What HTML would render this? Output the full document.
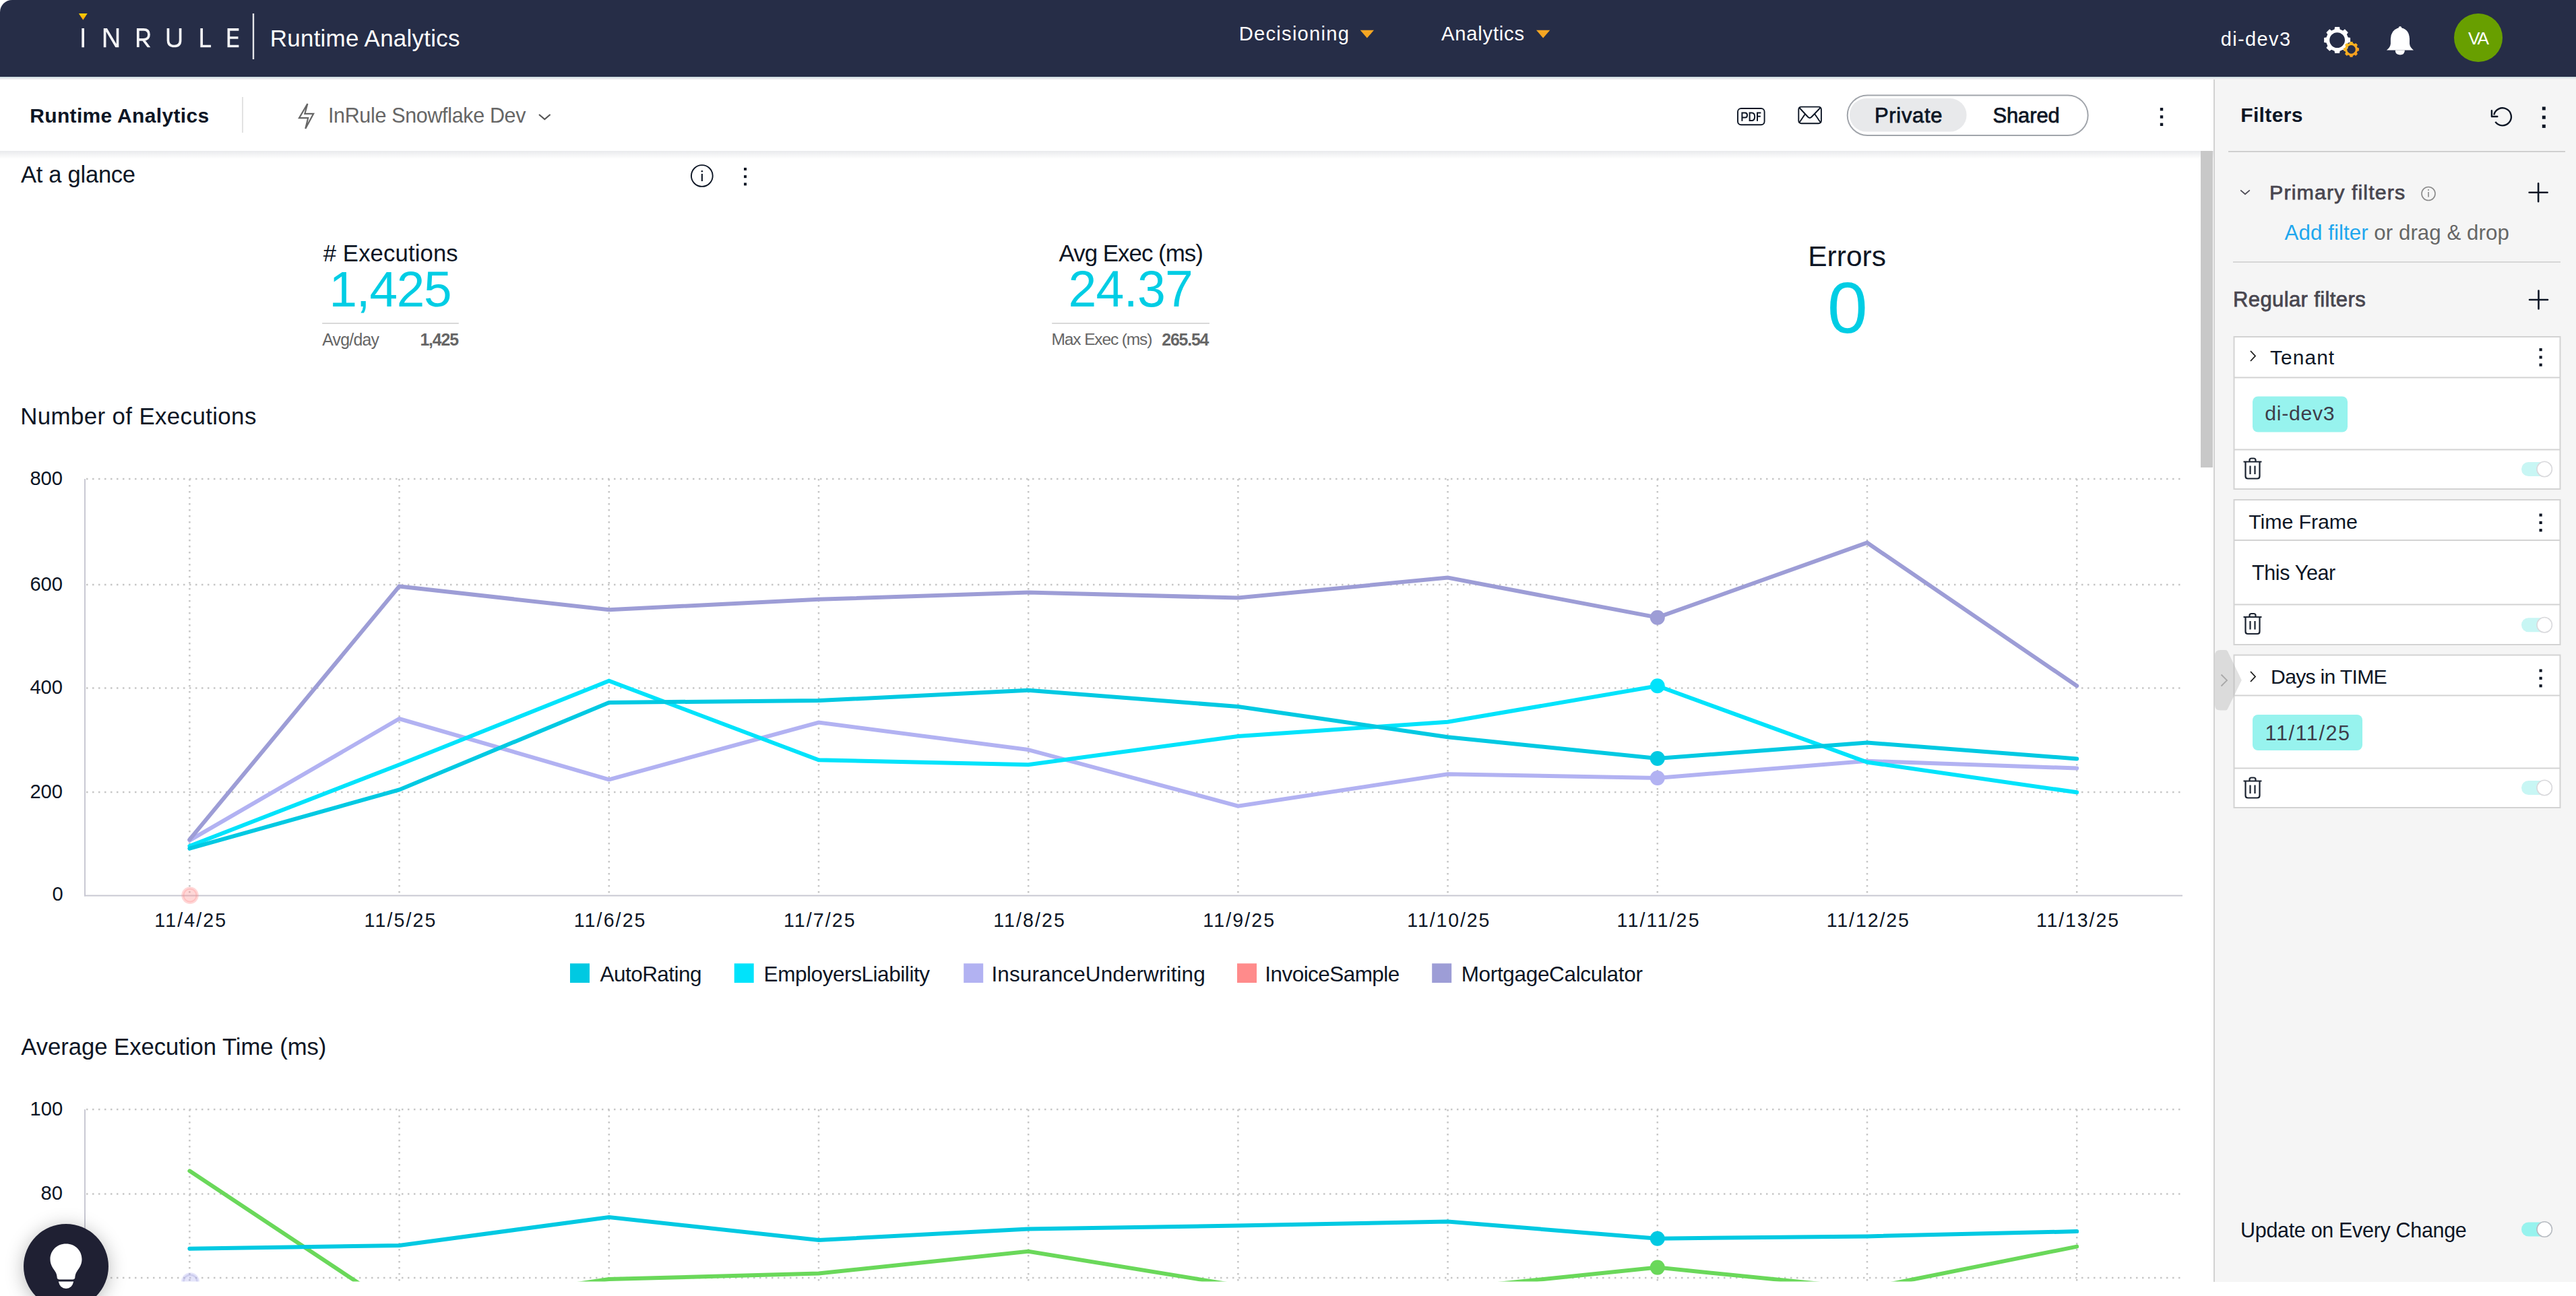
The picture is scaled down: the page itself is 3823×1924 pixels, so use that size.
<!DOCTYPE html><html><head><meta charset='utf-8'><style>
html,body{margin:0;padding:0;width:3823px;height:1924px;overflow:hidden;background:#ffffff}
.t{position:absolute;white-space:nowrap;font-family:"Liberation Sans",sans-serif}
.a{position:absolute}
</style></head><body>
<div class='a' style='left:0;top:0;width:3823px;height:114px;background:#262d47;border-top-left-radius:18px'></div>
<div class='a' style='left:0;top:114px;width:3823px;height:2px;background:#d3dfe3'></div>
<div class='a' style='left:0;top:116px;width:3823px;height:2px;background:#ededf0'></div>
<div class='a' style='left:0;top:224px;width:3286px;height:12px;background:linear-gradient(#e9eaed,#ffffff)'></div>
<div class='a' style='left:3286px;top:118px;width:537px;height:1785px;background:#f5f5f5'></div>
<div class='a' style='left:3284.5px;top:118px;width:2px;height:1785px;background:#d2d2d2'></div>
<div class='a' style='left:3266px;top:224px;width:18px;height:470px;background:#c8c8c8'></div>
<svg class='a' style='left:0;top:0' width='3823' height='1924' viewBox='0 0 3823 1924'><defs><linearGradient id='tri' x1='0' y1='0' x2='0' y2='1'><stop offset='0' stop-color='#ffd200'/><stop offset='1' stop-color='#f39c12'/></linearGradient><linearGradient id='gear2' x1='0' y1='0' x2='1' y2='1'><stop offset='0' stop-color='#f9c623'/><stop offset='1' stop-color='#f7931e'/></linearGradient><clipPath id='c2clip'><rect x='0' y='1580' width='3260' height='322.5'/></clipPath></defs><polygon points='116.9,19.9 129.7,19.9 123.3,29.8' fill='url(#tri)'/><rect x='121.3' y='42' width='3.7' height='28.3' fill='#f4f4f6'/><clipPath id='nclip'><rect x='150' y='42' width='30' height='28.3'/></clipPath><path clip-path='url(#nclip)' d='M155.6,75 V40 L174.5,72 V37' stroke='#f4f4f6' stroke-width='3.7' fill='none' stroke-linejoin='miter'/><clipPath id='rclip'><rect x='200' y='40' width='30' height='30.3'/></clipPath><path clip-path='url(#rclip)' d='M204.8,70.3 V43.8 H213 Q221,43.8 221,51.3 Q221,58.8 213,58.8 H204.8 M212.5,58.8 L222,71.5' stroke='#f4f4f6' stroke-width='3.7' fill='none'/><path d='M249.5,42 V60 Q249.5,68.5 258.5,68.5 Q267.6,68.5 267.6,60 V42' stroke='#f4f4f6' stroke-width='3.7' fill='none'/><path d='M299.2,42 V68.5 H313.1' stroke='#f4f4f6' stroke-width='3.7' fill='none'/><path d='M354.4,43.8 H339.4 V68.5 H354.4 M339.4,56 H353.5' stroke='#f4f4f6' stroke-width='3.7' fill='none'/><rect x='374.8' y='20' width='2.4' height='68' fill='#e6e6ea'/><polygon points='2018.7,44.7 2039,44.7 2028.85,56.6' fill='#f5a623'/><polygon points='2280,44.7 2300.3,44.7 2290.15,56.6' fill='#f5a623'/><path d='M3484.71,55.60 L3488.09,56.12 L3488.09,63.08 L3484.71,63.60 L3482.82,68.16 L3484.84,70.92 L3479.92,75.84 L3477.16,73.82 L3472.60,75.71 L3472.08,79.09 L3465.12,79.09 L3464.60,75.71 L3460.04,73.82 L3457.28,75.84 L3452.36,70.92 L3454.38,68.16 L3452.49,63.60 L3449.11,63.08 L3449.11,56.12 L3452.49,55.60 L3454.38,51.04 L3452.36,48.28 L3457.28,43.36 L3460.04,45.38 L3464.60,43.49 L3465.12,40.11 L3472.08,40.11 L3472.60,43.49 L3477.16,45.38 L3479.92,43.36 L3484.84,48.28 L3482.82,51.04 Z M3480.00,59.60 A11.4,11.4 0 1 0 3457.20,59.60 A11.4,11.4 0 1 0 3480.00,59.60 Z' fill='#ffffff' fill-rule='evenodd'/><path d='M3498.82,71.09 L3500.92,71.36 L3500.92,75.44 L3498.82,75.71 L3497.72,78.35 L3499.02,80.03 L3496.13,82.92 L3494.45,81.62 L3491.81,82.72 L3491.54,84.82 L3487.46,84.82 L3487.19,82.72 L3484.55,81.62 L3482.87,82.92 L3479.98,80.03 L3481.28,78.35 L3480.18,75.71 L3478.08,75.44 L3478.08,71.36 L3480.18,71.09 L3481.28,68.45 L3479.98,66.77 L3482.87,63.88 L3484.55,65.18 L3487.19,64.08 L3487.46,61.98 L3491.54,61.98 L3491.81,64.08 L3494.45,65.18 L3496.13,63.88 L3499.02,66.77 L3497.72,68.45 Z M3495.80,73.40 A6.3,6.3 0 1 0 3483.20,73.40 A6.3,6.3 0 1 0 3495.80,73.40 Z' fill='url(#gear2)' fill-rule='evenodd'/><path d='M3562,38.9 q2.2,0 2.4,2.6 q11,2.6 11.6,16 v7.5 q0.6,5.5 6,9.5 h-40.1 q5.4,-4 6,-9.5 v-7.5 q0.6,-13.4 11.6,-16 q0.2,-2.6 2.5,-2.6 z' fill='#ffffff'/><path d='M3554.8,74.6 h14.1 q0,6.8 -7.05,6.8 q-7.05,0 -7.05,-6.8 z' fill='#ffffff'/><circle cx='3678' cy='56' r='36' fill='#689f00'/><rect x='359' y='144' width='2' height='53' fill='#e2e2e2'/><path d='M456.4,154 L444,175.2 L457.2,175.2 L453.3,190.9 L465.2,168.8 L452.4,168.8 Z' fill='none' stroke='#666' stroke-width='2.2' stroke-linejoin='miter'/><path d='M800,170 L808.3,177 L816.6,170' fill='none' stroke='#555' stroke-width='2.2'/><rect x='2579' y='161' width='39.6' height='24.3' rx='5' fill='none' stroke='#0d1625' stroke-width='1.9'/><path d='M2585.4,179.8 V167.4 H2590 Q2593,167.4 2593,171 Q2593,174.6 2590,174.6 H2585.4' fill='none' stroke='#0d1625' stroke-width='2'/><path d='M2596.6,179 V167.4 H2599.6 Q2604.2,167.4 2604.2,173.2 Q2604.2,179 2599.6,179 Z' fill='none' stroke='#0d1625' stroke-width='2'/><path d='M2608,179.8 V167.4 H2613.4 M2608,172.8 H2612.8' fill='none' stroke='#0d1625' stroke-width='2'/><rect x='2669.3' y='158.6' width='33.6' height='24.6' rx='4' fill='none' stroke='#0d1625' stroke-width='1.9'/><path d='M2670,159.5 L2683,173.5 Q2685.8,176.5 2688.6,173.5 L2702,159.5 M2670,182.5 L2678.8,169.5 M2702.3,182.5 L2693.4,169.5' fill='none' stroke='#0d1625' stroke-width='1.9'/><rect x='2741.7' y='141.4' width='357' height='59.5' rx='29.75' fill='#ffffff' stroke='#a1a5ab' stroke-width='2'/><rect x='2745' y='146' width='173.6' height='49.6' rx='24.8' fill='#e8e9eb'/><rect x='3205.8' y='160.0' width='4.4' height='4.4' fill='#0d1625'/><rect x='3205.8' y='171.3' width='4.4' height='4.4' fill='#0d1625'/><rect x='3205.8' y='182.6' width='4.4' height='4.4' fill='#0d1625'/><rect x='1104.0' y='249.0' width='4' height='4' fill='#0d1625'/><rect x='1104.0' y='260.2' width='4' height='4' fill='#0d1625'/><rect x='1104.0' y='271.4' width='4' height='4' fill='#0d1625'/><rect x='3772.8' y='158.5' width='5' height='5' fill='#0d1625'/><rect x='3772.8' y='171.7' width='5' height='5' fill='#0d1625'/><rect x='3772.8' y='184.9' width='5' height='5' fill='#0d1625'/><circle cx='1041.8' cy='261' r='15.9' fill='none' stroke='#0d1625' stroke-width='1.9'/><rect x='1040.8' y='258' width='2.1' height='11' fill='#0d1625'/><circle cx='1041.85' cy='254.3' r='1.3' fill='#0d1625'/><path d='M3703.3,180.9 A13,13 0 1 0 3701.2,170.5' fill='none' stroke='#0d1625' stroke-width='2.4'/><path d='M3697.9,164.3 V173 H3706.3' fill='none' stroke='#0d1625' stroke-width='2.4' stroke-linecap='round' stroke-linejoin='round'/><rect x='478.2' y='479' width='202.6' height='2' fill='#d9d9d9'/><rect x='1561.2' y='479' width='233.7' height='2' fill='#d9d9d9'/><line x1='128' y1='711' x2='3236' y2='711' stroke='#c6c6c6' stroke-width='2.5' stroke-dasharray='2.5 6.5'/><line x1='128' y1='868' x2='3236' y2='868' stroke='#c6c6c6' stroke-width='2.5' stroke-dasharray='2.5 6.5'/><line x1='128' y1='1021.5' x2='3236' y2='1021.5' stroke='#c6c6c6' stroke-width='2.5' stroke-dasharray='2.5 6.5'/><line x1='128' y1='1176' x2='3236' y2='1176' stroke='#c6c6c6' stroke-width='2.5' stroke-dasharray='2.5 6.5'/><line x1='281.4' y1='711' x2='281.4' y2='1328' stroke='#c6c6c6' stroke-width='2.5' stroke-dasharray='2.5 6.5'/><line x1='592.5999999999999' y1='711' x2='592.5999999999999' y2='1328' stroke='#c6c6c6' stroke-width='2.5' stroke-dasharray='2.5 6.5'/><line x1='903.8' y1='711' x2='903.8' y2='1328' stroke='#c6c6c6' stroke-width='2.5' stroke-dasharray='2.5 6.5'/><line x1='1215.0' y1='711' x2='1215.0' y2='1328' stroke='#c6c6c6' stroke-width='2.5' stroke-dasharray='2.5 6.5'/><line x1='1526.1999999999998' y1='711' x2='1526.1999999999998' y2='1328' stroke='#c6c6c6' stroke-width='2.5' stroke-dasharray='2.5 6.5'/><line x1='1837.4' y1='711' x2='1837.4' y2='1328' stroke='#c6c6c6' stroke-width='2.5' stroke-dasharray='2.5 6.5'/><line x1='2148.6' y1='711' x2='2148.6' y2='1328' stroke='#c6c6c6' stroke-width='2.5' stroke-dasharray='2.5 6.5'/><line x1='2459.8' y1='711' x2='2459.8' y2='1328' stroke='#c6c6c6' stroke-width='2.5' stroke-dasharray='2.5 6.5'/><line x1='2771.0' y1='711' x2='2771.0' y2='1328' stroke='#c6c6c6' stroke-width='2.5' stroke-dasharray='2.5 6.5'/><line x1='3082.2' y1='711' x2='3082.2' y2='1328' stroke='#c6c6c6' stroke-width='2.5' stroke-dasharray='2.5 6.5'/><rect x='125' y='711' width='2' height='619.5' fill='#c9c9d3'/><rect x='125' y='1328.6' width='3114' height='2' fill='#c9c9d3'/><circle cx='282' cy='1329.2' r='12.7' fill='#ff8b8b' fill-opacity='0.35'/><circle cx='282' cy='1329.2' r='9.5' fill='none' stroke='#ff8b8b' stroke-opacity='0.3' stroke-width='2'/><polyline points='281.4,1247.6 592.6,1067.0 903.8,1157.3 1215.0,1072.5 1526.2,1113.1 1837.4,1196.6 2148.6,1149.3 2459.8,1155.0 2771.0,1129.8 3082.2,1140.5' fill='none' stroke='#b2b2f2' stroke-width='6' stroke-linejoin='miter' stroke-linecap='round'/><polyline points='281.4,1256.0 592.6,1135.2 903.8,1010.8 1215.0,1128.2 1526.2,1135.2 1837.4,1093.0 2148.6,1071.8 2459.8,1018.3 2771.0,1131.5 3082.2,1176.3' fill='none' stroke='#00e3fb' stroke-width='6' stroke-linejoin='miter' stroke-linecap='round'/><polyline points='281.4,1259.6 592.6,1172.5 903.8,1042.9 1215.0,1040.1 1526.2,1024.8 1837.4,1049.0 2148.6,1094.2 2459.8,1126.0 2771.0,1102.5 3082.2,1126.4' fill='none' stroke='#00c9e2' stroke-width='6' stroke-linejoin='miter' stroke-linecap='round'/><polyline points='281.4,1246.3 592.6,870.4 903.8,905.3 1215.0,889.8 1526.2,879.6 1837.4,887.6 2148.6,857.6 2459.8,916.7 2771.0,805.7 3082.2,1018.3' fill='none' stroke='#9d9dd6' stroke-width='6' stroke-linejoin='miter' stroke-linecap='round'/><circle cx='2459.8' cy='1155' r='11' fill='#b2b2f2'/><circle cx='2459.8' cy='1018.3' r='11' fill='#00e3fb'/><circle cx='2459.8' cy='1126' r='11' fill='#00c9e2'/><circle cx='2459.8' cy='916.7' r='11' fill='#9d9dd6'/><rect x='846' y='1430.3' width='29' height='28.7' fill='#00c9e2'/><rect x='1089.7' y='1430.3' width='29' height='28.7' fill='#00e3fb'/><rect x='1430.2' y='1430.3' width='29' height='28.7' fill='#b2b2f2'/><rect x='1836' y='1430.3' width='29' height='28.7' fill='#ff8b8b'/><rect x='2125.2' y='1430.3' width='29' height='28.7' fill='#9d9dd6'/><g clip-path='url(#c2clip)'><line x1='128' y1='1647' x2='3236' y2='1647' stroke='#c6c6c6' stroke-width='2.5' stroke-dasharray='2.5 6.5'/><line x1='128' y1='1772.5' x2='3236' y2='1772.5' stroke='#c6c6c6' stroke-width='2.5' stroke-dasharray='2.5 6.5'/><line x1='128' y1='1897' x2='3236' y2='1897' stroke='#c6c6c6' stroke-width='2.5' stroke-dasharray='2.5 6.5'/><line x1='281.4' y1='1647' x2='281.4' y2='1910' stroke='#c6c6c6' stroke-width='2.5' stroke-dasharray='2.5 6.5'/><line x1='592.5999999999999' y1='1647' x2='592.5999999999999' y2='1910' stroke='#c6c6c6' stroke-width='2.5' stroke-dasharray='2.5 6.5'/><line x1='903.8' y1='1647' x2='903.8' y2='1910' stroke='#c6c6c6' stroke-width='2.5' stroke-dasharray='2.5 6.5'/><line x1='1215.0' y1='1647' x2='1215.0' y2='1910' stroke='#c6c6c6' stroke-width='2.5' stroke-dasharray='2.5 6.5'/><line x1='1526.1999999999998' y1='1647' x2='1526.1999999999998' y2='1910' stroke='#c6c6c6' stroke-width='2.5' stroke-dasharray='2.5 6.5'/><line x1='1837.4' y1='1647' x2='1837.4' y2='1910' stroke='#c6c6c6' stroke-width='2.5' stroke-dasharray='2.5 6.5'/><line x1='2148.6' y1='1647' x2='2148.6' y2='1910' stroke='#c6c6c6' stroke-width='2.5' stroke-dasharray='2.5 6.5'/><line x1='2459.8' y1='1647' x2='2459.8' y2='1910' stroke='#c6c6c6' stroke-width='2.5' stroke-dasharray='2.5 6.5'/><line x1='2771.0' y1='1647' x2='2771.0' y2='1910' stroke='#c6c6c6' stroke-width='2.5' stroke-dasharray='2.5 6.5'/><line x1='3082.2' y1='1647' x2='3082.2' y2='1910' stroke='#c6c6c6' stroke-width='2.5' stroke-dasharray='2.5 6.5'/><rect x='125' y='1647' width='2' height='300' fill='#c9c9d3'/><circle cx='282.5' cy='1902.7' r='13.5' fill='#b2b2f2' fill-opacity='0.35'/><circle cx='282.5' cy='1902.7' r='10' fill='none' stroke='#9d9dd6' stroke-opacity='0.3' stroke-width='2.5'/><polyline points='281.4,1738.3 592.6,1945.0 903.8,1899.0 1215.0,1890.6 1526.2,1857.8 1837.4,1908.7 2148.6,1913.6 2459.8,1881.6 2771.0,1913.0 3082.2,1850.6' fill='none' stroke='#6ad85a' stroke-width='6' stroke-linejoin='miter' stroke-linecap='round'/><polyline points='281.4,1853.7 592.6,1849.0 903.8,1807.0 1215.0,1841.0 1526.2,1824.6 1837.4,1819.6 2148.6,1813.6 2459.8,1838.7 2771.0,1835.4 3082.2,1828.1' fill='none' stroke='#00c9e2' stroke-width='6' stroke-linejoin='miter' stroke-linecap='round'/><circle cx='2459.8' cy='1881.6' r='11' fill='#6ad85a'/><circle cx='2459.8' cy='1838.7' r='11' fill='#00c9e2'/></g><rect x='3307' y='224' width='500' height='2' fill='#cfcfcf'/><path d='M3325.2,282.4 L3332,288.3 L3338.8,282.4' fill='none' stroke='#4d4b55' stroke-width='1.8'/><circle cx='3604' cy='287.5' r='10' fill='none' stroke='#8a8a8a' stroke-width='1.6'/><rect x='3603.2' y='285' width='1.6' height='7.5' fill='#8a8a8a'/><circle cx='3604' cy='282' r='1.1' fill='#8a8a8a'/><path d='M3753.6,285.8 H3780.6 M3767.1,272.3 V299.3' stroke='#0d1625' stroke-width='2.6' stroke-linecap='round'/><path d='M3754.0,445 H3781.0 M3767.5,431.5 V458.5' stroke='#0d1625' stroke-width='2.6' stroke-linecap='round'/><rect x='3314' y='388' width='486' height='2' fill='#d6d6d6'/><rect x='3315.5' y='500' width='484' height='226' fill='#ffffff' stroke='#d3d3d3' stroke-width='2'/><rect x='3315.5' y='559.5' width='484' height='2' fill='#d3d3d3'/><rect x='3315.5' y='666.5' width='484' height='2' fill='#d3d3d3'/><rect x='3315.5' y='742' width='484' height='215' fill='#ffffff' stroke='#d3d3d3' stroke-width='2'/><rect x='3315.5' y='801' width='484' height='2' fill='#d3d3d3'/><rect x='3315.5' y='896.5' width='484' height='2' fill='#d3d3d3'/><rect x='3315.5' y='972.5' width='484' height='226.5' fill='#ffffff' stroke='#d3d3d3' stroke-width='2'/><rect x='3315.5' y='1031.5' width='484' height='2' fill='#d3d3d3'/><rect x='3315.5' y='1139.5' width='484' height='2' fill='#d3d3d3'/><path d='M3340,521.0 L3347,528.5 L3340,536.0' fill='none' stroke='#1a1a1a' stroke-width='1.8'/><path d='M3340,997.0 L3347,1004.5 L3340,1012.0' fill='none' stroke='#1a1a1a' stroke-width='1.8'/><rect x='3768.5' y='517.0' width='4.2' height='4.2' fill='#0d1625'/><rect x='3768.5' y='528.3' width='4.2' height='4.2' fill='#0d1625'/><rect x='3768.5' y='539.6' width='4.2' height='4.2' fill='#0d1625'/><rect x='3768.5' y='762.5' width='4.2' height='4.2' fill='#0d1625'/><rect x='3768.5' y='773.8' width='4.2' height='4.2' fill='#0d1625'/><rect x='3768.5' y='785.1' width='4.2' height='4.2' fill='#0d1625'/><rect x='3768.5' y='993.5' width='4.2' height='4.2' fill='#0d1625'/><rect x='3768.5' y='1004.8' width='4.2' height='4.2' fill='#0d1625'/><rect x='3768.5' y='1016.1' width='4.2' height='4.2' fill='#0d1625'/><rect x='3343' y='588.5' width='141' height='53' rx='8' fill='#97f3ee'/><rect x='3343' y='1061' width='163' height='53' rx='8' fill='#97f3ee'/><path d='M3329.5,685.5 H3356.5 M3338.5,685.5 V683.0 Q3338.5,680.5 3341.5,680.5 H3344.5 Q3347.5,680.5 3347.5,683.0 V685.5 M3332.5,685.5 V707.0 Q3332.5,710.5 3336.0,710.5 H3350.0 Q3353.5,710.5 3353.5,707.0 V685.5 M3339.5,691.5 V704.0 M3346.5,691.5 V704.0' fill='none' stroke='#1a2230' stroke-width='2.2'/><path d='M3329.5,916 H3356.5 M3338.5,916 V913.5 Q3338.5,911 3341.5,911 H3344.5 Q3347.5,911 3347.5,913.5 V916 M3332.5,916 V937.5 Q3332.5,941 3336.0,941 H3350.0 Q3353.5,941 3353.5,937.5 V916 M3339.5,922 V934.5 M3346.5,922 V934.5' fill='none' stroke='#1a2230' stroke-width='2.2'/><path d='M3329.5,1159.5 H3356.5 M3338.5,1159.5 V1157.0 Q3338.5,1154.5 3341.5,1154.5 H3344.5 Q3347.5,1154.5 3347.5,1157.0 V1159.5 M3332.5,1159.5 V1181.0 Q3332.5,1184.5 3336.0,1184.5 H3350.0 Q3353.5,1184.5 3353.5,1181.0 V1159.5 M3339.5,1165.5 V1178.0 M3346.5,1165.5 V1178.0' fill='none' stroke='#1a2230' stroke-width='2.2'/><rect x='3742' y='686.0' width='44.2' height='21' rx='10.5' fill='#c8f6f4'/><circle cx='3776.2' cy='696.5' r='11.2' fill='#ffffff' stroke='#d9d9dc' stroke-width='1.6'/><rect x='3742' y='917.25' width='44.2' height='21' rx='10.5' fill='#c8f6f4'/><circle cx='3776.2' cy='927.75' r='11.2' fill='#ffffff' stroke='#d9d9dc' stroke-width='1.6'/><rect x='3742' y='1159.0' width='44.2' height='21' rx='10.5' fill='#c8f6f4'/><circle cx='3776.2' cy='1169.5' r='11.2' fill='#ffffff' stroke='#d9d9dc' stroke-width='1.6'/><rect x='3742' y='1814.5' width='44.2' height='21' rx='10.5' fill='#97f3ee'/><circle cx='3776.2' cy='1825' r='11.2' fill='#ffffff' stroke='#b8bcc2' stroke-width='1.6'/><path d='M3295,965 H3303 Q3305,965 3306,967 L3326.8,1009.7 L3306,1052.5 Q3305,1054.6 3303,1054.6 H3295 Q3287,1054.6 3287,1046.6 V973 Q3287,965 3295,965 Z' fill='rgb(175,175,175)' fill-opacity='0.36'/><path d='M3296.5,1001.5 L3305,1010 L3296.5,1018.5' fill='none' stroke='#a8a8a8' stroke-width='1.9'/></svg>
<div class='t' style='left:400.8px;top:38.52px;font-size:35px;line-height:35px;font-weight:400;color:#ffffff;letter-spacing:0.213px;'>Runtime Analytics</div>
<div class='t' style='left:1838.8px;top:35.73px;font-size:29.2px;line-height:29.2px;font-weight:400;color:#ffffff;letter-spacing:1.22px;'>Decisioning</div>
<div class='t' style='left:2138.9px;top:35.73px;font-size:29.2px;line-height:29.2px;font-weight:400;color:#ffffff;letter-spacing:0.8px;'>Analytics</div>
<div class='t' style='left:3295.8px;top:43.5px;font-size:29px;line-height:29px;font-weight:400;color:#ffffff;letter-spacing:1.35px;'>di-dev3</div>
<div class='t' style='left:3662.9px;top:43.96px;font-size:26.2px;line-height:26.2px;font-weight:400;color:#ffffff;letter-spacing:-1.8px;'>VA</div>
<div class='t' style='left:44.3px;top:156.65px;font-size:30px;line-height:30px;font-weight:700;color:#0d1625;letter-spacing:0.325px;'>Runtime Analytics</div>
<div class='t' style='left:486.9px;top:156.13px;font-size:30.5px;line-height:30.5px;font-weight:400;color:#666666;letter-spacing:-0.342px;'>InRule Snowflake Dev</div>
<div class='t' style='left:2782px;top:155.81px;font-size:31px;line-height:31px;font-weight:400;-webkit-text-stroke:0.75px currentColor;color:#0d1625;letter-spacing:0.667px;'>Private</div>
<div class='t' style='left:2957.4px;top:155.81px;font-size:31px;line-height:31px;font-weight:400;-webkit-text-stroke:0.75px currentColor;color:#0d1625;letter-spacing:-0.1px;'>Shared</div>
<div class='t' style='left:3325.2px;top:156.37px;font-size:30.1px;line-height:30.1px;font-weight:700;color:#0d1625;letter-spacing:0.333px;'>Filters</div>
<div class='t' style='left:30.9px;top:241.66px;font-size:34.6px;line-height:34.6px;font-weight:400;color:#0d1625;letter-spacing:-0.28px;'>At a glance</div>
<div class='t' style='left:479.7px;top:358.68px;font-size:34.7px;line-height:34.7px;font-weight:400;color:#0d1625;letter-spacing:0.127px;'># Executions</div>
<div class='t' style='left:488.5px;top:392.48px;font-size:74.7px;line-height:74.7px;font-weight:400;color:#00cde4;letter-spacing:-1.2px;'>1,425</div>
<div class='t' style='left:478.2px;top:491.96px;font-size:24.9px;line-height:24.9px;font-weight:400;color:#666666;letter-spacing:-0.783px;'>Avg/day</div>
<div class='t' style='left:623.4px;top:491.96px;font-size:24.9px;line-height:24.9px;font-weight:700;color:#666666;letter-spacing:-1.15px;'>1,425</div>
<div class='t' style='left:1571.6px;top:358.51px;font-size:34.9px;line-height:34.9px;font-weight:400;color:#0d1625;letter-spacing:-0.992px;'>Avg Exec (ms)</div>
<div class='t' style='left:1585.4px;top:392.26px;font-size:75.2px;line-height:75.2px;font-weight:400;color:#00cde4;letter-spacing:-0.675px;'>24.37</div>
<div class='t' style='left:1560.6px;top:492.2px;font-size:24.5px;line-height:24.5px;font-weight:400;color:#666666;letter-spacing:-1.133px;'>Max Exec (ms)</div>
<div class='t' style='left:1724.3px;top:492.26px;font-size:24.9px;line-height:24.9px;font-weight:700;color:#666666;letter-spacing:-1.2px;'>265.54</div>
<div class='t' style='left:2683.2px;top:360.09px;font-size:42.5px;line-height:42.5px;font-weight:400;color:#0d1625;letter-spacing:0.02px;'>Errors</div>
<div class='t' style='left:2712px;top:404.33px;font-size:107.3px;line-height:107.3px;font-weight:400;color:#00cde4;letter-spacing:0px;'>0</div>
<div class='t' style='left:30.2px;top:601.41px;font-size:34.9px;line-height:34.9px;font-weight:400;color:#0d1625;letter-spacing:0.363px;'>Number of Executions</div>
<div class='t' style='left:31.2px;top:1537.38px;font-size:34.7px;line-height:34.7px;font-weight:400;color:#0d1625;letter-spacing:-0.042px;'>Average Execution Time (ms)</div>
<div class='t' style='left:3368.1px;top:270.01px;font-size:30.4px;line-height:30.4px;font-weight:400;-webkit-text-stroke:0.75px currentColor;color:#48464f;letter-spacing:1.093px;'>Primary filters</div>
<div class='t' style='left:3390.6px;top:329.64px;font-size:31.2px;line-height:31.2px;font-weight:400;color:#1ea7ee;letter-spacing:0.1px;'>Add filter</div>
<div class='t' style='left:3523.3px;top:329.64px;font-size:31.2px;line-height:31.2px;font-weight:400;color:#666666;letter-spacing:0.085px;'>or drag &amp; drop</div>
<div class='t' style='left:3314.1px;top:428.61px;font-size:31px;line-height:31px;font-weight:400;-webkit-text-stroke:0.75px currentColor;color:#48464f;letter-spacing:0.379px;'>Regular filters</div>
<div class='t' style='left:3369.1px;top:516.43px;font-size:29.9px;line-height:29.9px;font-weight:400;color:#0d1625;letter-spacing:1.06px;'>Tenant</div>
<div class='t' style='left:3361.3px;top:599.28px;font-size:30.2px;line-height:30.2px;font-weight:400;color:#3d3d4a;letter-spacing:0.7px;'>di-dev3</div>
<div class='t' style='left:3337.3px;top:759.31px;font-size:30.4px;line-height:30.4px;font-weight:400;color:#0d1625;letter-spacing:-0.111px;'>Time Frame</div>
<div class='t' style='left:3342px;top:834.83px;font-size:30.5px;line-height:30.5px;font-weight:400;color:#0d1625;letter-spacing:-0.363px;'>This Year</div>
<div class='t' style='left:3370.1px;top:990.08px;font-size:30.2px;line-height:30.2px;font-weight:400;color:#0d1625;letter-spacing:-0.727px;'>Days in TIME</div>
<div class='t' style='left:3361.6px;top:1073.34px;font-size:30.6px;line-height:30.6px;font-weight:400;color:#3d3d4a;letter-spacing:1.557px;'>11/11/25</div>
<div class='t' style='left:3325.1px;top:1810.93px;font-size:30.5px;line-height:30.5px;font-weight:400;color:#0d1625;letter-spacing:-0.324px;'>Update on Every Change</div>
<div class='t' style='left:44.4px;top:696.33px;font-size:29.2px;line-height:29.2px;font-weight:400;color:#0d1625;letter-spacing:0px;'>800</div>
<div class='t' style='left:44.4px;top:852.63px;font-size:29.2px;line-height:29.2px;font-weight:400;color:#0d1625;letter-spacing:0px;'>600</div>
<div class='t' style='left:44.4px;top:1005.83px;font-size:29.2px;line-height:29.2px;font-weight:400;color:#0d1625;letter-spacing:0px;'>400</div>
<div class='t' style='left:44.4px;top:1160.63px;font-size:29.2px;line-height:29.2px;font-weight:400;color:#0d1625;letter-spacing:0px;'>200</div>
<div class='t' style='left:77.4px;top:1313.33px;font-size:29.2px;line-height:29.2px;font-weight:400;color:#0d1625;letter-spacing:0px;'>0</div>
<div class='t' style='left:44.6px;top:1632.33px;font-size:29.2px;line-height:29.2px;font-weight:400;color:#0d1625;letter-spacing:0px;'>100</div>
<div class='t' style='left:60.6px;top:1756.73px;font-size:29.2px;line-height:29.2px;font-weight:400;color:#0d1625;letter-spacing:0px;'>80</div>
<div class='t' style='left:229.35px;top:1351.63px;font-size:28.6px;line-height:28.6px;font-weight:400;color:#0d1625;letter-spacing:2.083px;'>11/4/25</div>
<div class='t' style='left:540.55px;top:1351.63px;font-size:28.6px;line-height:28.6px;font-weight:400;color:#0d1625;letter-spacing:2.083px;'>11/5/25</div>
<div class='t' style='left:851.75px;top:1351.63px;font-size:28.6px;line-height:28.6px;font-weight:400;color:#0d1625;letter-spacing:2.083px;'>11/6/25</div>
<div class='t' style='left:1162.95px;top:1351.63px;font-size:28.6px;line-height:28.6px;font-weight:400;color:#0d1625;letter-spacing:2.083px;'>11/7/25</div>
<div class='t' style='left:1474.15px;top:1351.63px;font-size:28.6px;line-height:28.6px;font-weight:400;color:#0d1625;letter-spacing:2.083px;'>11/8/25</div>
<div class='t' style='left:1785.35px;top:1351.63px;font-size:28.6px;line-height:28.6px;font-weight:400;color:#0d1625;letter-spacing:2.083px;'>11/9/25</div>
<div class='t' style='left:2088.3px;top:1351.63px;font-size:28.6px;line-height:28.6px;font-weight:400;color:#0d1625;letter-spacing:1.857px;'>11/10/25</div>
<div class='t' style='left:2399.5px;top:1351.63px;font-size:28.6px;line-height:28.6px;font-weight:400;color:#0d1625;letter-spacing:2.143px;'>11/11/25</div>
<div class='t' style='left:2710.7px;top:1351.63px;font-size:28.6px;line-height:28.6px;font-weight:400;color:#0d1625;letter-spacing:1.857px;'>11/12/25</div>
<div class='t' style='left:3021.9px;top:1351.63px;font-size:28.6px;line-height:28.6px;font-weight:400;color:#0d1625;letter-spacing:1.857px;'>11/13/25</div>
<div class='t' style='left:890.6px;top:1430.68px;font-size:31.5px;line-height:31.5px;font-weight:400;color:#0d1625;letter-spacing:-0.556px;'>AutoRating</div>
<div class='t' style='left:1133.6px;top:1430.68px;font-size:31.5px;line-height:31.5px;font-weight:400;color:#0d1625;letter-spacing:-0.435px;'>EmployersLiability</div>
<div class='t' style='left:1471.5px;top:1430.68px;font-size:31.5px;line-height:31.5px;font-weight:400;color:#0d1625;letter-spacing:0.105px;'>InsuranceUnderwriting</div>
<div class='t' style='left:1877.3px;top:1430.68px;font-size:31.5px;line-height:31.5px;font-weight:400;color:#0d1625;letter-spacing:-0.55px;'>InvoiceSample</div>
<div class='t' style='left:2168.7px;top:1430.68px;font-size:31.5px;line-height:31.5px;font-weight:400;color:#0d1625;letter-spacing:-0.335px;'>MortgageCalculator</div>
<div class='a' style='left:0;top:1902.5px;width:3823px;height:22px;background:#ffffff'></div>
<div class='a' style='left:35px;top:1817px;width:126px;height:126px;border-radius:50%;background:#1f2033;box-shadow:0 4px 28px rgba(0,0,0,0.28)'></div>
<svg class='a' style='left:0;top:1780px' width='200' height='144' viewBox='0 1780 200 144'><path d='M98,1846.6 C84,1846.6 74.5,1857 74.5,1869.5 C74.5,1877 78,1882 81.5,1887 C84.2,1891 84.5,1894 84.8,1897.5 Q85.5,1899.6 88,1899.6 H108 Q110.5,1899.6 111.2,1897.5 C111.5,1894 111.8,1891 114.5,1887 C118,1882 121.5,1877 121.5,1869.5 C121.5,1857 112,1846.6 98,1846.6 Z' fill='#ffffff'/><path d='M86.8,1902.5 H109.2 Q107,1913 98,1913 Q89,1913 86.8,1902.5 Z' fill='#ffffff'/></svg>
</body></html>
